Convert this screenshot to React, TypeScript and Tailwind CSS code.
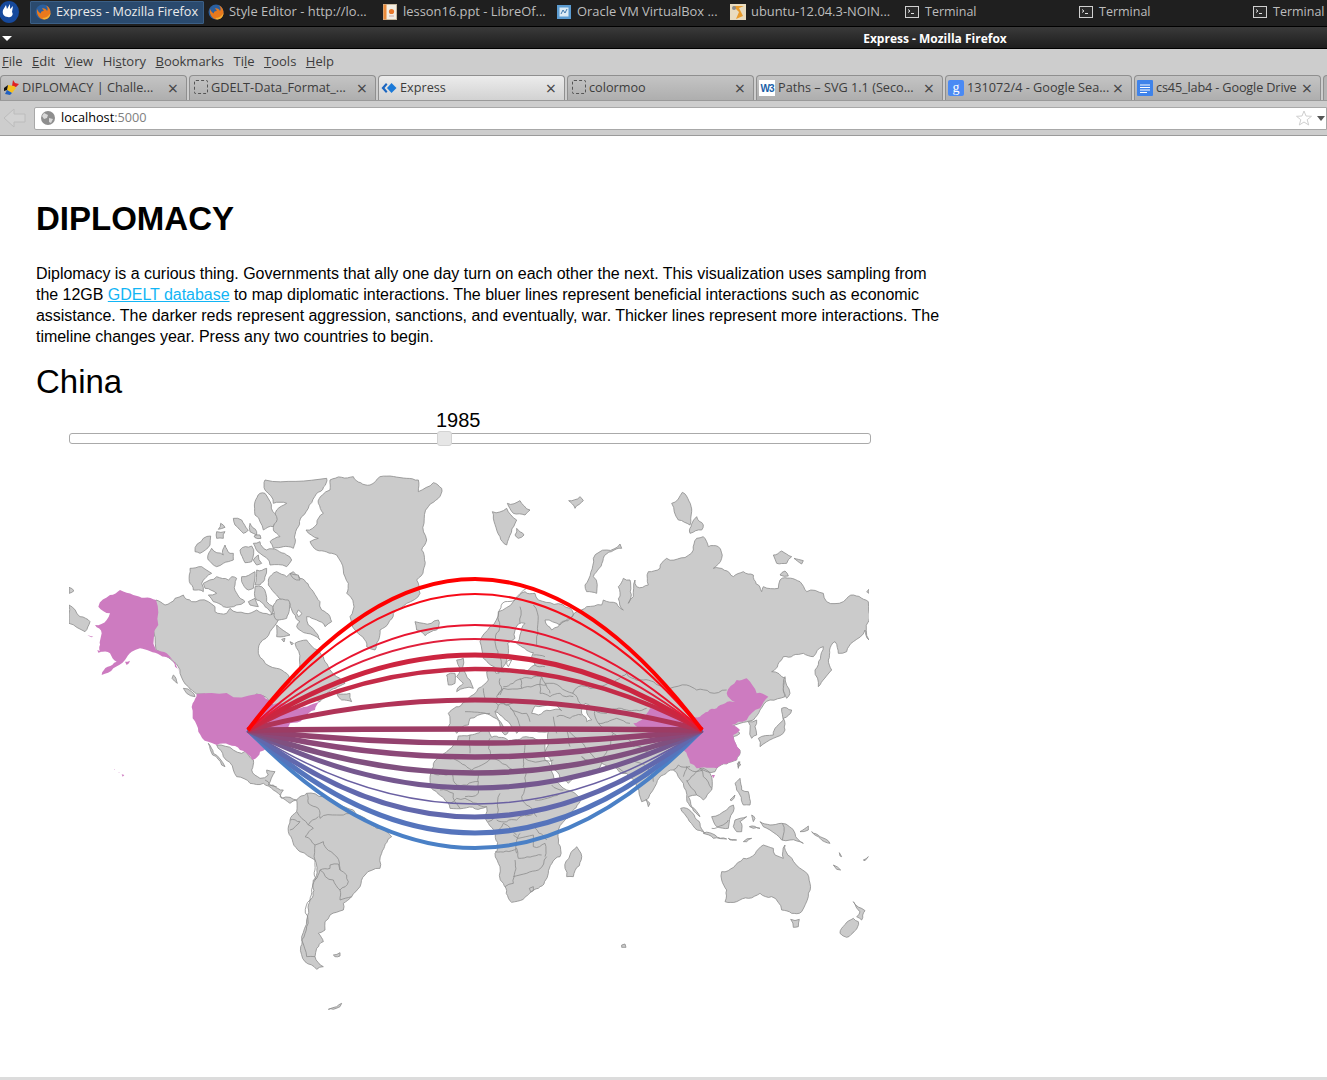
import React from 'react';

type Layer = { x: number; y: number; land?: string[]; water?: string[]; pink?: string[]; lines?: string[] };

// each layer is traced in 3x crop coordinates, so x/y is the crop origin on the page
const layers: Layer[] = [
  {
    x: 60,
    y: 470,
    land: [
      '810,30 880,20 930,45 960,20 1040,25 1075,30 1075,65 1120,38 1145,55 1135,85 1105,110 1100,210 1085,240 1090,300 1070,330 1080,370 1040,400 1000,430 960,480 945,540 920,530 885,480 870,440 880,400 860,370 865,340 850,300 830,255 770,240 750,215 775,205 738,180 790,130 775,100 810,60',
      '288,390 315,405 345,385 370,375 395,395 420,390 465,410 465,425 500,430 510,415 555,430 590,420 630,435 650,430 655,450 630,485 600,520 595,550 610,570 650,595 680,610 690,640 705,620 705,520 740,510 790,560 805,590 830,620 855,640 800,670 780,695 700,715 640,705 625,690 590,672 410,672 385,650 360,610 340,575 300,545 288,540',
      '625,330 650,305 680,320 700,305 720,325 760,365 780,395 785,420 810,440 815,455 795,470 770,450 740,440 745,465 780,510 740,490 710,470 720,455 690,400 650,375 625,345',
      '615,30 800,25 770,70 725,140 715,170 700,235 640,235 630,215 660,200 640,180 650,120 680,100 640,100 615,60',
      '585,95 600,70 615,70 650,140 640,170 610,180 585,135',
      '520,145 545,150 565,180 550,190 525,165',
      '570,160 590,185 590,195 570,185',
      '470,185 495,185 490,205 470,205',
      '482,160 495,172 475,178',
      '405,245 430,205 452,198 450,225 420,250',
      '443,265 455,235 490,255 495,225 510,250 520,250 520,270 490,280 470,290 445,270',
      '540,240 575,228 575,275 555,278',
      '580,220 600,215 620,240 680,255 695,270 680,290 630,285 600,250',
      '580,270 595,255 605,280 590,285',
      '582,198 600,195 603,205 585,203',
      '390,295 425,290 455,310 425,340 430,365 400,360 388,335',
      '430,340 470,320 505,330 515,320 530,325 525,345 555,395 530,405 490,410 460,395 445,375 470,370 435,355',
      '545,320 585,305 580,355 565,360 545,335',
      '590,300 620,295 600,345 585,345',
      '690,310 715,315 720,330 700,325',
      '650,465 690,495 670,500 650,500',
      '565,395 585,385 595,410 570,405',
      '585,350 605,350 620,395 640,410 635,435 615,410 590,390',
      '650,390 685,390 680,445 650,450 640,420',
      '830,670 870,670 875,695 845,690',
      '340,615 352,640 336,625',
      '370,655 395,665 405,680 380,670',
      '1065,455 1090,460 1135,450 1130,480 1095,497 1070,480',
      '27,352 42,362 27,370',
      '27,405 60,440 90,455 75,485 27,460',
      '665,508 675,505 672,516',
      '690,515 700,520 695,525',
    ],
    water: ['715,420 725,430 715,440 710,430'],
    pink: [
      '115,410 150,375 180,360 220,375 288,390 288,540 320,550 350,590 360,610 345,590 330,565 300,555 240,535 215,545 195,570 160,595 125,615 170,575 150,550 120,545 125,490 105,465 140,450 150,430',
      '82,495 100,500 95,502',
      '112,540 125,545 115,548',
      '195,575 210,572 200,585',
      '410,672 590,672 625,690 640,705 700,715 780,695 765,720 730,745 690,760 655,790 640,810 620,835 600,845 578,870 560,850 540,840 470,825 445,815 415,785 398,745 398,700',
    ],
  },
  {
    x: 60,
    y: 740,
    land: [
      '470,15 520,30 545,40 560,30 580,60 575,90 600,115 625,105 620,90 645,95 625,135 640,135 670,150 660,170 690,190 710,180 690,172 665,175 640,150 610,130 570,130 530,110 520,90 490,50',
      '445,10 460,40 495,80 485,75 458,45',
      '710,180 740,160 790,170 830,190 880,210 890,225 950,265 995,290 965,340 960,385 915,405 900,440 875,470 850,490 850,510 810,525 795,545 795,570 775,580 790,605 770,625 765,650 790,680 770,688 735,665 722,620 725,590 740,540 750,480 760,420 765,360 720,335 685,275 690,240 710,215',
      '820,645 840,638 840,648 825,650',
      '805,808 830,800 845,790 840,800 820,808',
    ],
    pink: ['185,103 193,105 188,110', '175,96 178,96 178,98', '162,87 165,87 165,89'],
    lines: [
      '710,215 745,255 760,265 735,290 765,315 790,305 830,350 840,390 860,405 865,425 840,450 840,480 875,470',
      '765,315 765,360 765,420 750,480 740,560 725,600 740,650 765,650',
      '780,390 810,385 810,375 835,372 840,390',
      '780,390 765,420',
      '840,450 820,420 780,390',
      '690,240 720,245 690,270',
      '740,160 745,190 775,205 780,235 830,225 850,225 885,225',
      '745,255 775,230',
      '615,120 630,135 650,140',
    ],
  },
  {
    x: 470,
    y: 470,
    land: [
      '-65,730 -15,695 20,665 25,655 55,630 50,605 70,595 78,610 85,608 72,590 40,565 30,515 60,470 85,425 130,395 165,365 195,370 205,390 300,415 310,430 270,465 225,450 245,480 265,470 295,445 320,425 350,410 395,405 400,390 440,400 460,420 445,350 460,325 480,330 475,400 490,380 495,330 500,350 535,345 535,305 570,295 590,265 670,240 680,205 700,200 715,230 745,230 755,265 730,295 790,320 820,305 850,315 875,365 880,350 925,355 930,330 990,335 1010,365 1060,370 1070,395 1120,395 1135,380 1195,395 1197,510 1185,480 1150,515 1130,545 1105,550 1095,515 1075,570 1085,600 1045,650 1035,600 1060,530 1030,560 1000,550 940,560 905,605 945,625 945,680 900,690 870,720 850,750 810,760 785,770 810,790 790,800 810,840 800,870 740,895 735,905 690,895 720,910 725,960 700,990 680,975 655,980 665,1010 690,1040 650,985 640,940 610,900 560,940 535,985 515,995 500,950 470,910 430,890 395,880 380,900 295,940 270,925 245,890 225,845 235,825 235,785 160,775 140,790 125,770 115,755 90,735 75,725 100,770 115,785 105,795 90,765 60,735 45,730 0,745 -5,765 -40,790 -65,770',
      '67,125 110,115 140,150 110,225 90,200',
      '112,100 150,92 180,120 165,135 130,130',
      '140,175 162,195 145,205 135,195',
      '296,92 330,80 340,92 315,115',
      '345,345 370,265 410,240 450,222 455,235 400,265 370,320 380,370 350,365',
      '605,100 637,67 665,125 660,165 625,150',
      '660,190 680,140 700,165 695,180',
      '910,255 935,243 965,260 950,280 920,280',
      '972,265 1000,272 995,282',
      '930,315 945,303 955,318',
      '1190,365 1197,358 1197,370',
      // africa
      '-35,798 0,795 55,778 65,802 120,815 150,808 225,818 225,870 250,915 270,945 290,960 335,985 300,1040 265,1080 265,1120 270,1160 235,1210 205,1255 160,1288 125,1297 100,1240 90,1190 75,1150 75,1085 55,1060 50,1010 -20,1015 -60,1015 -110,960 -115,900 -110,890 -65,840',
      // madagascar
      '320,1130 333,1150 310,1220 290,1220 285,1195 300,1155',
      // britain and ireland
      '-70,615 -45,610 -45,640 -65,645',
      '-40,570 -20,565 -22,592 0,630 10,655 -40,665 -20,640 -40,620 -30,595',
      // sri lanka, japan, sakhalin, taiwan, korea
      '528,988 540,1000 535,1010',
      '865,805 910,795 940,750 935,715 965,720 940,745 945,780 910,805 870,830',
      '945,620 960,670 950,685 940,655',
      '802,880 810,875 805,895',
      '835,755 860,750 855,770 860,795 845,805 840,780',
      // se asia and oceania
      '632,1015 650,1015 690,1060 705,1090 675,1075',
      '700,1090 735,1095 770,1107 730,1105',
      '725,1040 770,1020 790,1005 790,1025 775,1075 740,1070',
      '795,1050 830,1040 810,1055 815,1085 800,1085 790,1070',
      '870,1055 900,1065 935,1060 975,1090 1000,1120 960,1110 935,1110 900,1080 880,1070',
      '795,940 810,925 815,960 835,965 840,1005 820,1005 810,975 800,960',
      '780,990 795,975 785,992',
      '775,1105 800,1110 780,1110',
      '820,1115 845,1105 830,1115',
      '845,1035 855,1045 850,1055',
      '838,1070 870,1075 850,1075',
      '806,875 812,885 804,890',
      // australia
      '755,1205 820,1165 880,1125 910,1135 915,1155 940,1165 945,1125 975,1180 1005,1205 1020,1240 1015,1280 995,1325 965,1330 935,1320 905,1280 870,1270 800,1295 765,1295 770,1260 755,1230',
      '962,1348 988,1348 985,1370 970,1372',
      '1150,1295 1185,1322 1175,1350 1160,1340 1170,1325',
      '1110,1390 1150,1345 1165,1355 1130,1402',
      '1025,1085 1080,1120 1050,1100',
      '990,1085 1015,1068 1015,1080',
      '1090,1185 1112,1200 1100,1198',
      '1108,1148 1115,1160 1110,1158',
      '1180,1170 1195,1160 1185,1172',
      '455,1425 465,1422 468,1432 455,1432',
    ],
    water: [
      '85,610 100,590 115,550 113,520 135,505 145,462 165,460 150,495 140,520 190,548 185,560 195,585 170,610 140,600',
      '185,730 195,708 240,700 275,722 240,722 205,735',
      '345,700 358,705 350,720 365,750 350,755 335,730',
      '335,860 360,872 345,870',
      '110,575 125,570 115,590',
    ],
    lines: [
      '170,355 135,390 105,395 85,450 75,515 95,595',
      '150,410 150,460',
      '190,405 200,500 200,525',
      '308,670 325,650 360,655 420,640 470,610 520,630 580,650',
      '600,655 650,645 680,660 720,668 770,660',
      '308,670 330,700 375,720 410,730 470,720 530,715',
      '375,720 385,760 440,745 480,760',
      '385,760 430,790 470,805 490,830 540,850',
      '430,790 420,830 395,880',
      '260,740 300,745 335,735',
      '250,740 260,790',
      '290,780 345,830 390,875',
      '230,780 290,780 300,830',
      '100,650 130,640 185,625 215,620 225,640 250,640 270,650',
      '270,650 310,670',
      '215,620 210,670 240,680 270,670 310,680',
      '150,625 155,655 100,655 90,675',
      '155,655 230,645',
      '225,640 240,670',
      '40,655 45,685 85,705 75,725',
      '90,625 95,660 85,675',
      '-15,725 60,730',
      '100,655 80,680 110,705 150,690 200,695',
      '85,705 115,705 135,735 150,770',
      '120,715 170,730 180,755',
      '150,600 175,605 200,610',
      '190,555 225,560',
      '195,585 225,590',
      // africa
      '60,805 62,865 25,890 5,900 -50,865 -85,855',
      '0,795 0,850',
      '165,825 160,890 155,980',
      '165,865 250,870',
      '62,865 110,885 160,910',
      '25,905 25,970 -15,980',
      '-110,910 -50,905 -45,940 25,935',
      '90,970 85,1020 55,1055',
      '155,980 180,1010 200,1040',
      '195,990 270,970',
      '245,945 280,960',
      '80,1050 140,1050 190,1030',
      '150,1090 140,1150',
      '195,1060 230,1110',
      '75,1145 140,1135 145,1165 215,1155',
      '135,1170 130,1240 105,1250',
      '130,1220 170,1210 205,1200 230,1160',
      '225,1120 225,1160',
      '190,1095 190,1130 225,1120',
      '130,1095 145,1105 190,1095',
      '85,1080 100,1060 140,1095',
      '-60,1000 -40,985 -15,985 20,1000 50,1010',
      '-90,960 -50,970 -30,1015',
      '178,1255 190,1250 190,1262 182,1265 178,1255',
      // se asia
      '640,920 650,890 675,905 700,900',
      '650,935 690,895 700,920 725,955',
      '650,930 680,975',
      '725,1075 775,1050',
      '937,1060 937,1110',
      '550,935 530,890 480,875',
      '430,890 460,905 470,910',
      '610,900 625,885 660,890',
    ],
    pink: [
      '490,760 540,715 600,735 660,740 690,740 740,715 795,695 770,670 800,630 830,625 860,670 895,680 870,715 830,750 805,755 785,765 810,780 790,795 810,840 800,870 740,895 680,895 660,880 640,840 590,795 520,785',
      '725,915 735,915 730,925',
    ],
  },
];

// the traces are coarse, so break long straight runs up into a coastline-like wiggle
function roughen(points: string, closed = true) {
  let pts = points.split(' ').map((p) => p.split(',').map(Number));
  for (let pass = 0; pass < 3; pass++) {
    const next: number[][] = [];
    pts.forEach((a, i) => {
      next.push(a);
      if (!closed && i === pts.length - 1) return;
      const b = pts[(i + 1) % pts.length];
      const dx = b[0] - a[0];
      const dy = b[1] - a[1];
      const len = Math.hypot(dx, dy);
      if (len < 14) return;
      const n = Math.sin(a[0] * 12.9898 + a[1] * 78.233) * 43758.5453;
      const off = (n - Math.floor(n) - 0.5) * 0.28;
      next.push([(a[0] + b[0]) / 2 - dy * off, (a[1] + b[1]) / 2 + dx * off]);
    });
    pts = next;
  }
  return pts.map((p) => `${p[0].toFixed(1)},${p[1].toFixed(1)}`).join(' ');
}

const arcs: { peak: number; width: number; color: string }[] = [
  { peak: 848, width: 4, color: '#4a80c6' },
  { peak: 833, width: 5, color: '#5574bc' },
  { peak: 817, width: 5, color: '#6168ad' },
  { peak: 804, width: 1.5, color: '#6a60a2' },
  { peak: 788, width: 5, color: '#75588f' },
  { peak: 773, width: 5.5, color: '#80507f' },
  { peak: 757, width: 5.5, color: '#8c4878' },
  { peak: 743, width: 5.5, color: '#93426e' },
  { peak: 729, width: 5.5, color: '#9c3c64' },
  { peak: 700, width: 5, color: '#b03458' },
  { peak: 669, width: 4.5, color: '#c42b48' },
  { peak: 655, width: 5, color: '#cc2540' },
  { peak: 639, width: 2, color: '#e0203c' },
  { peak: 625, width: 2, color: '#e81530' },
  { peak: 594, width: 2, color: '#f70a18' },
  { peak: 579, width: 4, color: '#ff0000' },
];

function WorldMap() {
  return (
    <svg viewBox="69 470 800 540" className="block h-[540px] w-[800px]">
      {layers.map((l, i) => (
        <g key={i} transform={`translate(${l.x} ${l.y}) scale(${1 / 3})`}>
          {l.land?.map((p, j) => (
            <polygon key={j} points={roughen(p)} fill="#cbcbcb" stroke="#8c8c8c" strokeWidth={0.8} strokeLinejoin="round" vectorEffect="non-scaling-stroke" />
          ))}
        </g>
      ))}
      {layers.map((l, i) => (
        <g key={i} transform={`translate(${l.x} ${l.y}) scale(${1 / 3})`}>
          {l.water?.map((p, j) => (
            <polygon key={j} points={roughen(p)} fill="#ffffff" stroke="#8c8c8c" strokeWidth={0.8} vectorEffect="non-scaling-stroke" />
          ))}
          {l.lines?.map((p, j) => (
            <polyline key={j} points={roughen(p, false)} fill="none" stroke="#8c8c8c" strokeWidth={0.8} vectorEffect="non-scaling-stroke" />
          ))}
          {l.pink?.map((p, j) => (
            <polygon key={j} points={roughen(p)} fill="#cd7bc0" />
          ))}
        </g>
      ))}
      {arcs.map((a) => (
        <path
          key={a.peak}
          d={`M248 730 Q475 ${730 + 2 * (a.peak - 730)} 702 730`}
          fill="none"
          stroke={a.color}
          strokeWidth={a.width}
        />
      ))}
    </svg>
  );
}

function Firefox() {
  return (
    <svg viewBox="0 0 16 16" className="h-4 w-4 shrink-0">
      <circle cx="8" cy="8" r="7.5" fill="#2b5f9e" />
      <path d="M2 5 C1 11 5 15.5 9 15.5 C13 15.5 16 12 15.5 7.5 C15 4 13 2 11 1.5 C13 4 13 6 12 7 C11 5 9 4 7 4.5 C8 5.5 9 6 8.5 7 C6.5 7 5.5 8 6 9.5 C4 9 3 7 2 5Z" fill="#e8791d" />
      <path d="M9 15.5 C13 15.5 15.5 12 15.5 9 C14 12 11 14 7 14Z" fill="#f2b134" />
    </svg>
  );
}

function Impress() {
  return (
    <svg viewBox="0 0 14 16" className="h-4 w-[14px] shrink-0">
      <rect x="0.5" y="0.5" width="13" height="15" fill="#f3ede2" stroke="#c9b9a0" />
      <rect x="0.5" y="0.5" width="3" height="15" fill="#e98a3a" />
      <circle cx="8.5" cy="7.5" r="2.6" fill="#e8772a" />
      <rect x="6" y="11.5" width="5" height="1" fill="#caa" />
    </svg>
  );
}

function VBox() {
  return (
    <svg viewBox="0 0 14 14" className="h-[14px] w-[14px] shrink-0">
      <rect width="14" height="14" fill="#5b9bd0" />
      <rect x="2.5" y="2.5" width="9" height="9" fill="#dcebf5" />
      <path d="M4 9 L6 5 L8 8 L10 4" fill="none" stroke="#3f78ac" />
    </svg>
  );
}

function Archive() {
  return (
    <svg viewBox="0 0 16 16" className="h-4 w-4 shrink-0">
      <rect width="16" height="16" fill="#e9dcc0" />
      <path d="M3 2 L9 8 L6 15 L13 12 L9 4 L14 2Z" fill="#e89b2c" />
      <circle cx="4" cy="4" r="2" fill="#8a8a8a" />
    </svg>
  );
}

function TerminalIcon() {
  return (
    <svg viewBox="0 0 14 12" className="h-3 w-[14px] shrink-0">
      <rect x="0.5" y="0.5" width="13" height="11" fill="#2a2a2a" stroke="#d0d0d0" />
      <path d="M3 3.5 L5 5 L3 6.5" fill="none" stroke="#e0e0e0" />
      <rect x="6" y="7" width="3" height="1" fill="#e0e0e0" />
    </svg>
  );
}

const windows: { label: string; icon: React.ReactNode; active?: boolean }[] = [
  { label: 'Express - Mozilla Firefox', icon: <Firefox />, active: true },
  { label: 'Style Editor - http://lo...', icon: <Firefox /> },
  { label: 'lesson16.ppt - LibreOf...', icon: <Impress /> },
  { label: 'Oracle VM VirtualBox ...', icon: <VBox /> },
  { label: 'ubuntu-12.04.3-NOIN...', icon: <Archive /> },
  { label: 'Terminal', icon: <TerminalIcon /> },
  { label: 'Terminal', icon: <TerminalIcon /> },
  { label: 'Terminal', icon: <TerminalIcon /> },
];

function Dashed() {
  return (
    <span className="flex h-4 w-4 shrink-0 justify-end">
      <span className="h-[14px] w-[14px] rounded-[2px] border border-dashed border-[#555]" />
    </span>
  );
}

const tabs: { label: string; icon: React.ReactNode; active?: boolean }[] = [
  {
    label: 'DIPLOMACY | Challe...',
    icon: (
      <svg viewBox="0 0 16 16" className="h-4 w-4 shrink-0">
        <path d="M10 0 L12 3 L16 4 L13 7 L9 6Z" fill="#e02020" />
        <path d="M5 5 L11 6 L13 8 L9 13 L4 10Z" fill="#f4c020" />
        <path d="M4 10 L9 13 L7 15 L2 14Z" fill="#2060c0" />
        <path d="M1 8 L5 5 L4 10 L1 11Z" fill="#111" />
      </svg>
    ),
  },
  { label: 'GDELT-Data_Format_...', icon: <Dashed /> },
  {
    label: 'Express',
    active: true,
    icon: (
      <svg viewBox="0 0 16 12" className="h-3 w-4 shrink-0">
        <path d="M5 1 L0.5 6 L5 11 L6.5 9.5 L3.5 6 L6.5 2.5Z" fill="#1c66c0" />
        <path d="M10.5 1 L15.5 6 L10.5 11 L6 6Z" fill="#1c7ad8" />
      </svg>
    ),
  },
  { label: 'colormoo', icon: <Dashed /> },
  {
    label: 'Paths – SVG 1.1 (Seco...',
    icon: (
      <span className="flex h-4 w-4 shrink-0 items-center justify-center bg-white font-['Liberation_Sans',sans-serif] text-[10px] font-bold tracking-[-1px] text-[#1a5fa8]">
        W3
      </span>
    ),
  },
  {
    label: '131072/4 - Google Sea...',
    icon: (
      <span className="flex h-4 w-4 shrink-0 items-center justify-center rounded-[2px] bg-[#4a8af4] font-['Liberation_Serif',serif] text-[14px] leading-none text-white">
        g
      </span>
    ),
  },
  {
    label: 'cs45_lab4 - Google Drive',
    icon: (
      <svg viewBox="0 0 16 16" className="h-4 w-4 shrink-0">
        <rect width="16" height="16" rx="1" fill="#3f83ea" />
        <path d="M3 5 H13 M3 7.5 H13 M3 10 H13 M3 12.5 H10" stroke="#fff" />
      </svg>
    ),
  },
];

const menus = [
  ['F', 'ile'],
  ['E', 'dit'],
  ['V', 'iew'],
  ['Hi', 's', 'tory'],
  ['B', 'ookmarks'],
  ['Ti', 'l', 'e'],
  ['T', 'ools'],
  ['H', 'elp'],
];

function Menu({ parts }: { parts: string[] }) {
  if (parts.length === 3) {
    return (
      <span>
        {parts[0]}
        <span className="underline">{parts[1]}</span>
        {parts[2]}
      </span>
    );
  }
  return (
    <span>
      <span className="underline">{parts[0]}</span>
      {parts[1]}
    </span>
  );
}

export default function App() {
  return (
    <div className="flex h-[1080px] flex-col overflow-hidden bg-white font-['Liberation_Sans',sans-serif] text-black">
      {/* desktop panel */}
      <div className="flex h-[26px] items-center bg-[#1f1f1f] pb-[2px] font-['Open_Sans',sans-serif] text-[#bdbdbd]">
        <div className="flex w-[30px] shrink-0 justify-start">
          <svg viewBox="0 0 20 22" className="h-[22px] w-5">
            <ellipse cx="9" cy="11" rx="10" ry="11" fill="#16499c" />
            <path d="M3 9 L6 4 L7 8 L10 3 L10 8 L13 5 L12 11 C14 14 11 17 8 16 C4 16 2 13 3 9Z" fill="#fff" />
          </svg>
        </div>
        {windows.map((w, i) => (
          <div
            key={i}
            className={`flex h-[23px] w-[174px] shrink-0 items-center gap-[5px] overflow-hidden whitespace-nowrap pl-[4px] ${
              w.active ? 'rounded-[1px] border border-[#3b5f86] bg-[#2a4a6e] text-[12.7px] text-[#ececec]' : w.label === 'Terminal' ? 'text-[12.5px]' : 'text-[12.9px]'
            }`}
          >
            <span className="flex w-4 shrink-0 justify-center">{w.icon}</span>
            <span>{w.label}</span>
          </div>
        ))}
      </div>

      {/* title bar */}
      <div className="relative flex h-[23px] items-center justify-center border-t border-b border-black bg-gradient-to-b from-[#3a3a3a] to-[#1e1e1e] pl-[543px] pt-[2px] font-['Open_Sans',sans-serif] text-[12px] font-bold text-white">
        <span className="absolute left-[2px] top-[9px] h-0 w-0 border-x-[5px] border-t-[5px] border-x-transparent border-t-white" />
        Express - Mozilla Firefox
      </div>

      {/* menu */}
      <div className="flex h-[25px] items-center gap-[9.5px] bg-[#cdcdcd] pl-[2px] font-['Open_Sans',sans-serif] text-[13px] text-[#3c3c3c]">
        {menus.map((m) => (
          <Menu key={m.join('')} parts={m} />
        ))}
      </div>

      {/* tabs */}
      <div className="flex h-[26px] items-end gap-[2px] overflow-hidden bg-[#cdcdcd] font-['Open_Sans',sans-serif] text-[12.7px] text-[#3c3c3c]">
        {tabs.map((t) => (
          <div
            key={t.label}
            className={`flex h-[25px] w-[187px] shrink-0 items-center gap-[3px] overflow-hidden whitespace-nowrap rounded-t-[4px] border border-b-0 border-[#8f8f8f] pl-[2px] pr-[8px] ${
              t.active ? 'bg-gradient-to-b from-[#ececec] to-[#d2d2d2]' : 'bg-gradient-to-b from-[#c4c4c4] to-[#aeaeae]'
            }`}
          >
            {t.icon}
            <span className={`min-w-0 flex-1 ${t.label.startsWith('cs45') ? 'tracking-[-0.15px]' : ''}`}>{t.label}</span>
            <span className="text-[18px] leading-none text-[#444]">×</span>
          </div>
        ))}
        <div className="h-[25px] w-[10px] shrink-0 rounded-tl-[4px] border border-b-0 border-[#8f8f8f] bg-[#b4b4b4]" />
      </div>

      {/* url bar */}
      <div className="flex h-[36px] items-center gap-[8px] border-t border-b border-[#9a9a9a] bg-[#cdcdcd] pl-[3px]">
        <svg viewBox="0 0 23 20" className="h-5 w-[23px] shrink-0">
          <path d="M11 1 L1 10 L11 19 V14 H22 V6 H11Z" fill="#d2d2d2" stroke="#bcbcbc" />
        </svg>
        <div className="flex h-[23px] flex-1 items-center rounded-l-[2px] border border-[#a8a8a8] bg-white pl-[6px] pr-[1px] font-['Open_Sans',sans-serif] text-[12.7px]">
          <svg viewBox="0 0 14 14" className="mr-[6px] h-[14px] w-[14px]">
            <circle cx="7" cy="7" r="7" fill="#8e8e8e" />
            <path d="M3 2 L7 4 L6 7 L3 8 L1 5Z M8 7 L12 8 L10 12 L8 11Z" fill="#d9d9d9" />
          </svg>
          <span className="text-black">localhost</span>
          <span className="text-[#808080]">:5000</span>
          <span className="ml-auto flex items-center gap-[5px]">
            <svg viewBox="0 0 16 16" className="h-4 w-4">
              <path d="M8 1 L10 6 L15.5 6.3 L11.2 9.7 L12.7 15 L8 12 L3.3 15 L4.8 9.7 L0.5 6.3 L6 6Z" fill="#fff" stroke="#cfcfcf" />
            </svg>
            <span className="h-0 w-0 border-x-[4px] border-t-[5px] border-x-transparent border-t-[#555]" />
          </span>
        </div>
      </div>

      {/* page */}
      <div className="flex-1 px-9">
        <h1 className="mt-[64px] text-[33px] font-bold leading-[38px]">DIPLOMACY</h1>
        <p className="mt-[25px] w-[930px] text-[16px] leading-[21px] tracking-[-0.03px]">
          Diplomacy is a curious thing. Governments that ally one day turn on each other the next. This visualization uses sampling from
          <br />
          the 12GB{' '}
          <a href="#" className="text-[#12b5f5] underline">
            GDELT database
          </a>{' '}
          to map diplomatic interactions. The bluer lines represent beneficial interactions such as economic
          <br />
          assistance. The darker reds represent aggression, sanctions, and eventually, war. Thicker lines represent more interactions. The
          <br />
          timeline changes year. Press any two countries to begin.
        </p>
        <h2 className="mt-[13px] text-[33px] font-normal leading-[44px]">China</h2>
        <div className="ml-[33px] w-[802px]">
          <div className="mt-[3px] pl-[367px] text-[20px] leading-[26px]">1985</div>
          <div className="relative h-[11px] rounded-[3px] border border-[#aaaaaa] bg-white">
            <span className="absolute left-[367px] top-[-3px] h-[15px] w-[15px] rounded-[3px] border border-[#d3d3d3] bg-[#e6e6e6]" />
          </div>
          <div className="mt-[26px]">
            <WorldMap />
          </div>
        </div>
      </div>

      <div className="h-[3px] bg-[#dcdcdc]" />
    </div>
  );
}
